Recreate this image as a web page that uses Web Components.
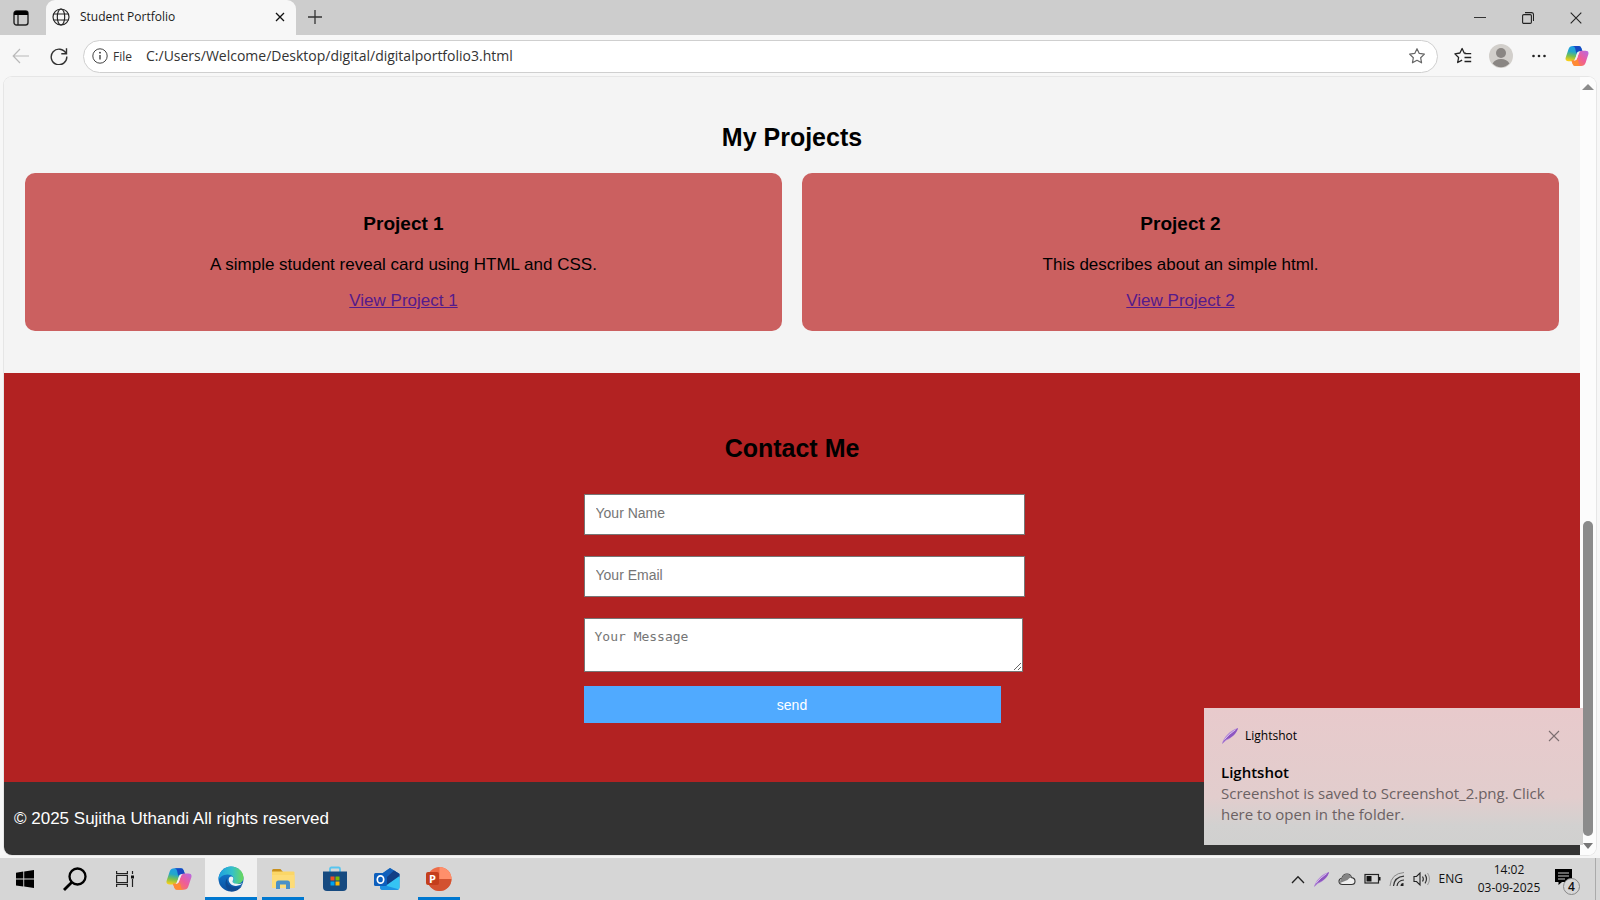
<!DOCTYPE html>
<html lang="en">
<head>
<meta charset="utf-8">
<title>Student Portfolio</title>
<style>
  body { margin: 0; font-family: "Open Sans", "Noto Sans", sans-serif; color: #1b1b1b; }
</style>
</head>
<body>
<desktop-screen>
  <tab-strip slot="window">Student Portfolio</tab-strip>
  <address-toolbar slot="window" scheme="File" url="C:/Users/Welcome/Desktop/digital/digitalportfolio3.html"></address-toolbar>
  <page-viewport slot="window">
    <projects-section heading="My Projects">
      <project-card heading="Project 1" link="View Project 1">A simple student reveal card using HTML and CSS.</project-card>
      <project-card heading="Project 2" link="View Project 2">This describes about an simple html.</project-card>
    </projects-section>
    <contact-section></contact-section>
    <page-footer>© 2025 Sujitha Uthandi All rights reserved</page-footer>
    <toast-notification slot="overlay" app="Lightshot" heading="Lightshot">Screenshot is saved to Screenshot_2.png. Click here to open in the folder.</toast-notification>
  </page-viewport>
  <task-bar slot="taskbar"></task-bar>
</desktop-screen>

<script>
const define = (name, render) => customElements.define(name, class extends HTMLElement {
  constructor() { super(); this.attachShadow({ mode: 'open' }); }
  connectedCallback() { this.shadowRoot.innerHTML = render(this); }
});
const attr = (el, n) => el.getAttribute(n) || '';

const copilot = `<defs>
  <linearGradient id="a" x1=".6" y1="0" x2=".4" y2="1"><stop offset="0" stop-color="#1f9be8"/><stop offset=".4" stop-color="#22a7c9"/><stop offset=".7" stop-color="#7cc04b"/><stop offset="1" stop-color="#f5cf1a"/></linearGradient>
  <linearGradient id="b" x1="1" y1="0" x2="0" y2="1"><stop offset="0" stop-color="#b56be6"/><stop offset=".45" stop-color="#ee5c9a"/><stop offset="1" stop-color="#ff8a34"/></linearGradient></defs>
  <path d="M8.500 1.200H15q2 0 2.700 2.200l1.300 3.800h-3.300q-2 0-2.700 2.200l-1.900 6q-.7 2.200-2.900 2.200H3.700Q-.4 17.600.7 13.600L3.700 4.500Q4.800 1.200 8.500 1.200z" fill="url(#a)"/>
  <path d="M10.500 1.200H15q2 0 2.700 2.200l1.300 3.800h-4.300q-1.700 0-2.500 1.700L11 3.500Q10.500 1.500 8.500 1.200z" fill="#1748c2"/>
  <path d="M17.500 22.800H11q-2 0-2.700-2.200L7 16.800h3.300q2 0 2.700-2.200l1.900-6q.7-2.200 2.900-2.200h4.500q4.100 0 3 4l-3 9.100q-1.100 3.300-4.800 3.300z" fill="url(#b)"/>
  <path d="M15.500 22.800H11q-2 0-2.700-2.200L7 16.800h4.300q1.700 0 2.500-1.700l1.200 5.400q.5 2 2.500 2.300z" fill="#ff8a34"/>
  <path d="M13 9.400q.6-2 2.300-2.200h1.500q-1.300.4-1.900 2.300l-1.900 5.100q-.6 2-2.300 2.200H9.500q1-.4 1.600-2.200z" fill="#f6eef3"/>`;
const star = 'M9 1.700l2.250 4.700 5.150.7-3.750 3.600.9 5.100L9 13.300l-4.550 2.500.9-5.100L1.600 7.100l5.150-.7z';
const feather = `<path d="M1 17C2 11 9 3 17 1c-1 5-6 10-12 12.500z" fill="#b48bd8"/><path d="M1 17C4 12 9 6 17 1c-1.500 6-7 10-12 11.500z" fill="#8d56c0"/><path d="M3.500 12.500Q8 7 14.500 2.800" stroke="#e2cdf0" stroke-width=".8"/>`;

/* name: [width, height, viewBox, markup] */
const ICONS = {
  workspaces: [16, 16, '0 0 16 16', '<rect x="1" y="1" width="14" height="14" rx="2.500" fill="none" stroke="#222" stroke-width="1.400"/><path d="M1 5V3.500Q1 1 3.500 1h9Q15 1 15 3.500V5z" fill="#000"/><path d="M5 5v10" stroke="#222" stroke-width="1.300"/>'],
  globe: [18, 18, '0 0 18 18', '<g fill="none" stroke="#222" stroke-width="1.150"><circle cx="9" cy="9" r="8"/><ellipse cx="9" cy="9" rx="3.700" ry="8"/><path d="M1.700 6h14.600M1.700 12h14.600"/></g>'],
  tabclose: [10, 10, '0 0 10 10', '<path d="M1 1l8 8M9 1l-8 8" stroke="#111" stroke-width="1.300" fill="none"/>'],
  plus: [16, 16, '0 0 16 16', '<path d="M8 1v14M1 8h14" stroke="#333" stroke-width="1.300"/>'],
  minimize: [12, 12, '0 0 12 12', '<path d="M0 5.500h12" stroke="#333" stroke-width="1"/>'],
  restore: [12, 12, '0 0 12 12', '<g fill="none" stroke="#222" stroke-width="1.100"><rect x=".6" y="2.600" width="8.800" height="8.800" rx="1.200"/><path d="M3 .6h6.500q2 0 2 2V9"/></g>'],
  close: [12, 12, '0 0 12 12', '<path d="M.7.7l10.600 10.600M11.300.7.7 11.300" stroke="#222" stroke-width="1.100"/>'],
  toastclose: [12, 12, '0 0 12 12', '<path d="M1 1l10 10M11 1 1 11" stroke="#7b6e70" stroke-width="1.100"/>'],
  back: [18, 16, '0 0 18 16', '<path d="M17 8H1.500M8 1 1.200 8 8 15" fill="none" stroke="#b9b9b9" stroke-width="1.200"/>'],
  reload: [18, 18, '0 0 18 18', '<path d="M16 6.500A7.800 7.800 0 1 0 16.800 9.500M16.500 1.300v5.400h-5.200" fill="none" stroke="#333" stroke-width="1.400"/>'],
  info: [16, 16, '0 0 16 16', '<circle cx="8" cy="8" r="7.200" fill="none" stroke="#444"/><path d="M8 7v4.600" stroke="#333" stroke-width="1.300"/><circle cx="8" cy="4.700" r=".9" fill="#333"/>'],
  star: [18, 18, '0 0 18 18', `<path d="${star}" fill="none" stroke="#666" stroke-width="1.200" stroke-linejoin="round"/>`],
  favorites: [18, 18, '0 0 18 18', '<path d="M12 6.400 10.200 6 8.100 1.500 5.900 6 .9 6.900l3.700 3.600-.9 5 4.400-2.400M10.500 6.700h6.700M10.500 10.500h6.700M10.500 14.500h6.700" fill="none" stroke="#222" stroke-width="1.300" stroke-linejoin="round"/>'],
  avatar: [24, 24, '0 0 24 24', '<circle cx="12" cy="12" r="12" fill="#d2cfcb"/><circle cx="12" cy="9" r="5" fill="#8a8683"/><path d="M3.600 19.500Q6 15 12 15t8.400 4.500Q17 23.200 12 23.200t-8.400-3.700z" fill="#8a8683"/>'],
  dots: [16, 16, '0 0 16 16', '<g fill="#222"><circle cx="2.500" cy="8" r="1.300"/><circle cx="8" cy="8" r="1.300"/><circle cx="13.500" cy="8" r="1.300"/></g>'],
  copilot: [24, 22, '0 0 26 24', copilot],
  feather: [18, 18, '0 0 18 18', feather],
  up: [12, 6, '0 0 12 6', '<path d="M6 0l6 6H0z" fill="#8b8b8b"/>'],
  down: [10, 6, '0 0 10 6', '<path d="M5 6 0 0h10z" fill="#777"/>'],
  windows: [18, 18, '0 0 18 18', '<path d="M0 2.700 7.300 1.600v6.900H0zM8.200 1.500 18 0v8.500H8.200zM0 9.400h7.300v7L0 15.400zM8.200 9.400H18V18l-9.800-1.400z" fill="#000"/>'],
  search: [24, 24, '0 0 24 24', '<circle cx="14.500" cy="9.500" r="8" fill="none" stroke="#000" stroke-width="2.300"/><path d="M8.800 15.200 1 23" stroke="#000" stroke-width="2.800"/>'],
  taskview: [18, 18, '0 0 18 18', '<g fill="none" stroke="#222" stroke-width="1.200"><path d="M.6 1v2.600h10.800V1M.6 17v-2.600h10.800V17M.6 5.500h10.800v7H.6z"/><path d="M16.500 1v3M16.500 9v8"/></g><path d="M15 5.500h3v3h-3z" fill="#111"/>'],
  edge: [26, 26, '0 0 26 26', `<defs><linearGradient id="e" x1="0" x2="1"><stop offset="0" stop-color="#1d9fe0"/><stop offset=".55" stop-color="#35c1c8"/><stop offset="1" stop-color="#6bd957"/></linearGradient><linearGradient id="f" x1="0" y1="0" x2="0" y2="1"><stop offset="0" stop-color="#1583d8"/><stop offset="1" stop-color="#0b4f9f"/></linearGradient></defs>
    <circle cx="13" cy="13" r="12.500" fill="url(#f)"/><path d="M.6 12C2 4.500 7.500.5 13 .5 20.500.5 25.500 6 25.500 11.500c0 4-3 6.500-7 6.500-3.300 0-4.500-1.800-3.700-2.800 2.200-3-.3-6.700-5.300-6.700C5 8.500 1.500 11.500.6 14z" fill="url(#e)"/>
    <path d="M9.300 12c-1.500 5 2 9.500 8.700 9.500 2.500 0 4.500-.7 6-1.600Q20 25.500 13.500 25.500C8 24 5.500 17 9.300 12z" fill="#0f4a93"/>
    <path d="M14.700 15q1.300-2 .3-3.700Q13 9.300 11 11.800c-1.500 4 2 8.200 7 8.200q4.200 0 7-3-3 1.300-6.300.8-5-.6-4-2.800z" fill="#eef3f6"/>`],
  explorer: [24, 22, '0 0 24 22', '<path d="M1 2.500Q1 1 2.500 1h7L12 4H1z" fill="#c9901c"/><path d="M1 3.500h21.500q1 0 1 1V20H1z" fill="#fbd667"/><path d="M1 7h22.500v13H1z" fill="#fddc78"/><path d="M5 21v-6q0-2.500 2.500-2.500h9Q19 12.500 19 15v6h-4v-4.500H9V21z" fill="#4b91c8"/>'],
  store: [26, 26, '0 0 26 26', '<path d="M8 6V3q0-1.500 1.500-1.500h7Q18 1.500 18 3v3" fill="none" stroke="#58c5ef" stroke-width="1.800"/><path d="M1 5.500h24V21q0 4-4 4H5q-4 0-4-4z" fill="#164a80"/><path d="M8.500 10.500h4v4h-4z" fill="#f25022"/><path d="M13.500 10.500h4v4h-4z" fill="#7fba00"/><path d="M8.500 15.500h4v4h-4z" fill="#00a4ef"/><path d="M13.500 15.500h4v4h-4z" fill="#ffb900"/>'],
  outlook: [26, 24, '0 0 26 24', '<path d="M6 8 16 1l9.500 6v13q0 3-3 3H9q-3 0-3-3z" fill="#1b87dc"/><path d="M6 8 16 1l9.500 6L13 15 6 13z" fill="#1560b8"/><path d="M13 10 20 3.600 25.500 7v3L13 18z" fill="#123f86"/><path d="M10 20 25.500 9v11q0 3-3 3H9z" fill="#35c4f3"/><path d="M6 17l18.500 5.200q-.8.800-2 .8H9q-3 0-3-3z" fill="#1d92e2"/><rect x="0" y="6" width="13" height="13" rx="1.500" fill="#0d5fbd"/><ellipse cx="6.500" cy="12.500" rx="3.200" ry="3.700" fill="none" stroke="#fff" stroke-width="1.700"/>'],
  wifi: [16, 16, '0 0 16 16', '<g fill="none"><path d="M1 15Q2 2.500 15 1.500" stroke="#888"/><path d="M4.500 15Q5.500 6 15 5.200M8 15q.7-5.500 7-6" stroke="#333" stroke-width="1.200"/></g><path d="M11.500 15q0-3 3-3v3z" fill="#222"/>'],
  battery: [17, 12, '0 0 17 12', '<rect x="1" y="1.500" width="13.500" height="8.500" fill="none" stroke="#222" stroke-width="1.200"/><path d="M2.500 3h5v5.500h-5zM15 4h1.500v3.500H15z" fill="#111"/>'],
  cloud: [18, 14, '0 0 18 14', '<path d="M4.500 12.500Q1 12.500 1 9.300 1 6.800 3.800 6.300 5 2 9 2q3.500 0 4.600 3.600Q17 6 17 9.200q0 3.300-3.500 3.300z" fill="#eee" stroke="#333" stroke-width="1.100"/><path d="M3.800 6.300Q5 2 9 2q3.500 0 4.600 3.600Q11 6 9.500 8L2 11Q2 7 3.800 6.300z" fill="#858585"/>'],
  chevron: [14, 9, '0 0 14 9', '<path d="M1 8l6-6.300L13 8" fill="none" stroke="#222" stroke-width="1.300"/>'],
  speaker: [18, 16, '0 0 18 16', '<path d="M1 5.500h2.500L7 2v12l-3.500-3.500H1z" fill="none" stroke="#222" stroke-width="1.100"/><path d="M9.500 5.500q1.700 2.500 0 5M12 3.700q3 4.300 0 8.600" fill="none" stroke="#333" stroke-width="1.200"/><path d="M14.500 2q4 6 0 12" fill="none" stroke="#999"/>'],
  message: [17, 16, '0 0 17 16', '<path d="M0 0h17v13H7l-3.500 3v-3H0z" fill="#000"/><path d="M3 4h11M3 7h11M3 10h7" stroke="#ccc"/>'],
};
define('ui-icon', el => {
  const [w, h, box, body] = ICONS[attr(el, 'name')];
  return `<style>:host{display:inline-flex;flex:none}svg{display:block}</style><svg width="${attr(el, 'size') || w}" height="${attr(el, 'size') || h}" viewBox="${box}" fill="none" aria-hidden="true">${body}</svg>`;
});

const RESET = `*{box-sizing:border-box}button{border:0;padding:0;margin:0;background:none;font:inherit;color:inherit;display:flex;align-items:center;justify-content:center}`;

define('desktop-screen', () => `<style>
  :host{display:flex;flex-direction:column;height:100vh;overflow:hidden;background:#d6d6d6}
  main{flex:1;min-height:0;display:flex;flex-direction:column;background:#f7f7f7;border-bottom:3px solid #f5f5f5}
  </style><main><slot name="window"></slot></main><slot name="taskbar"></slot>`);

define('tab-strip', () => `<style>${RESET}
  :host{display:flex;flex:none;height:35px;background:#cdcdcd}
  .side{width:46px;padding-right:4px}
  .tab{display:flex;align-items:center;width:250px;padding:0 11px 2px 6px;border-radius:9px 9px 0 0;background:#f7f7f7;font-size:12px;line-height:16px}
  .tab span{flex:1;padding-left:10px}
  .new{width:38px;padding-bottom:2px}
  .controls{margin-left:auto;display:flex}
  .controls button{width:48px}
  </style>
  <button class="side" aria-label="Tab actions"><ui-icon name="workspaces"></ui-icon></button>
  <div class="tab"><ui-icon name="globe"></ui-icon><span><slot></slot></span><button aria-label="Close tab"><ui-icon name="tabclose"></ui-icon></button></div>
  <button class="new" aria-label="New tab"><ui-icon name="plus"></ui-icon></button>
  <div class="controls"><button aria-label="Minimize"><ui-icon name="minimize"></ui-icon></button><button aria-label="Restore"><ui-icon name="restore"></ui-icon></button><button aria-label="Close"><ui-icon name="close"></ui-icon></button></div>`);

define('address-toolbar', el => `<style>${RESET}
  :host{display:flex;flex:none;align-items:center;height:42px;padding:0 4px 0 2px}
  .nav{width:38px;height:33px}
  .box{flex:1;display:flex;align-items:center;height:33px;margin:0 6px 0 5px;padding:0 11px 0 8px;border:1px solid #cfcfcf;border-radius:17px;background:#fff}
  .scheme{display:flex;align-items:center;gap:5px;font-size:12px;color:#333}
  input{flex:1;min-width:0;border:0;outline:0;margin-left:14px;padding:0;background:none;font:14px/20px "Open Sans","Noto Sans",sans-serif;color:#333}
  .tool{width:38px;height:33px}
  </style>
  <button class="nav" aria-label="Back"><ui-icon name="back"></ui-icon></button>
  <button class="nav" aria-label="Refresh"><ui-icon name="reload"></ui-icon></button>
  <div class="box"><span class="scheme"><ui-icon name="info"></ui-icon>${attr(el, 'scheme')}</span>
    <input type="text" aria-label="Address" value="${attr(el, 'url')}">
    <button aria-label="Add to favorites"><ui-icon name="star"></ui-icon></button></div>
  <button class="tool" aria-label="Favorites"><ui-icon name="favorites"></ui-icon></button>
  <button class="tool" aria-label="Profile"><ui-icon name="avatar"></ui-icon></button>
  <button class="tool" aria-label="Settings and more"><ui-icon name="dots"></ui-icon></button>
  <button class="tool" aria-label="Copilot"><ui-icon name="copilot"></ui-icon></button>`);

define('page-viewport', () => `<style>${RESET}
  :host{position:relative;display:flex;flex:1;min-height:0;margin:0 4px;border-radius:8px;overflow:hidden;background:#fff;box-shadow:0 0 0 1px #e6e6e6}
  .page{flex:1;min-width:0;overflow:hidden;background:#f4f4f4;font-family:"Liberation Sans",Arial,sans-serif;color:#000;display:flex;flex-direction:column}
  .bar{display:flex;flex-direction:column;align-items:center;width:16px;padding:7px 0 6px;background:#fcfcfc}
  .track{flex:1;display:flex;flex-direction:column;align-items:center;padding:0 0 7px}
  .before{flex:432}
  .thumb{flex:315;width:10px;border-radius:5px;background:#8b8b8b}
  </style><div class="page"><slot></slot></div>
  <div class="bar"><ui-icon name="up"></ui-icon><div class="track"><div class="before"></div><div class="thumb"></div></div><ui-icon name="down"></ui-icon></div>
  <slot name="overlay"></slot>`);

define('projects-section', el => `<style>
  :host{display:block;padding:46px 21px 42px}
  h2{margin:0 0 22px;font-size:25px;line-height:28px;text-align:center}
  .grid{display:grid;grid-template-columns:1fr 1fr;gap:20px}
  </style><h2>${attr(el, 'heading')}</h2><div class="grid"><slot></slot></div>`);

define('project-card', el => `<style>
  :host{display:block;padding:40px 20px 20px;border-radius:10px;background:#cb6060;text-align:center;font-size:17px;line-height:20px}
  h3{margin:0 0 20px;font-size:19px;line-height:22px}
  p{margin:0 0 16px}
  a{display:inline-block;color:#551a8b;text-decoration:underline}
  .more{display:flex;justify-content:center}
  </style><h3>${attr(el, 'heading')}</h3><p><slot></slot></p><div class="more"><a href="#">${attr(el, 'link')}</a></div>`);

define('contact-section', () => `<style>${RESET}
  :host{display:block;padding:61px 21px 59px;background:#b22222}
  h2{margin:0 0 32px;font-size:25px;line-height:28px;text-align:center}
  form{display:flex;flex-direction:column;width:417px;max-width:100%;margin:0 auto}
  input,textarea{border:1px solid #767676;border-radius:0;background:#fff;outline:0}
  input{width:441px;height:41px;margin:0 0 21px;padding:0 11px 3px;font:14px/18px "Liberation Sans",Arial,sans-serif}
  textarea{width:439px;height:54px;margin:0 0 14px;padding:10px;font:13px/16px "DejaVu Sans Mono",monospace}
  ::placeholder{color:#757575;opacity:1}
  button{height:37px;background:#50aaff;color:#fff;font-size:14px;line-height:18px}
  </style><h2>Contact Me</h2>
  <form><input type="text" aria-label="Your Name" placeholder="Your Name"><input type="email" aria-label="Your Email" placeholder="Your Email"><textarea aria-label="Your Message" placeholder="Your Message"></textarea><button type="button">send</button></form>`);

define('page-footer', () => `<style>:host{display:block;flex:1;padding:27px 10px;background:#333;color:#fff;font-size:17px;line-height:20px}</style><slot></slot>`);

define('toast-notification', el => `<style>${RESET}
  :host{box-sizing:border-box;position:absolute;right:13px;bottom:10px;width:379px;padding:18px 17px 20px;background:linear-gradient(#e8cacc,#e2cdcd 65%,#d2d1d0 86%,#d0d0cf);color:#000}
  header{display:flex;align-items:center;gap:6px;margin-bottom:16px;padding-right:6px;font-size:12px;line-height:20px}
  header button{margin-left:auto}
  strong{display:block;font-size:15px;font-weight:600;line-height:21px}
  p{margin:0;font-size:15px;line-height:21px;color:#6b6163}
  </style><header><ui-icon name="feather"></ui-icon>${attr(el, 'app')}<button aria-label="Dismiss"><ui-icon name="toastclose"></ui-icon></button></header>
  <strong>${attr(el, 'heading')}</strong><p><slot></slot></p>`);

define('powerpoint-icon', () => `<style>
  :host{display:grid;grid-template-columns:26px;position:relative}
  svg{display:block}
  b{position:absolute;left:0;top:6px;width:13px;height:13px;border-radius:2px;background:#c43e1c;color:#fff;font:bold 11px/13px "Open Sans",sans-serif;text-align:center}
  </style><svg width="26" height="26" viewBox="0 0 26 26"><circle cx="13.500" cy="13" r="12" fill="#ed6c47"/><path d="M13.500 1a12 12 0 0 1 12 12h-12z" fill="#ff8f6b"/><path d="M1.500 13h24a12 12 0 0 1-24 0z" fill="#d35230"/></svg><b>P</b>`);

define('task-bar', () => `<style>${RESET}
  :host{display:flex;flex:none;height:42px;background:#d6d6d6;color:#111}
  nav{display:flex}
  nav button{width:50px}
  .apps{display:flex;margin-left:3px}
  .apps button{width:52px;border-bottom:3px solid transparent;padding-top:2px}
  .apps .open{width:42px;margin:0 5px;border-color:#0078d0}
  .apps .active{background:#f0f0f0;border-color:#0078d0}
  .tray{margin-left:auto;display:flex;align-items:center;gap:8px;padding-right:12px;font-size:12px;line-height:18px}
  .clock{width:76px;text-align:center}
  .notes{position:relative;width:28px;height:28px;padding-top:4px;align-items:flex-start;justify-content:flex-start}
  .badge{position:absolute;left:8px;top:13px;width:17px;height:17px;border:1px solid #888;border-radius:50%;background:#d6d6d6;font-weight:600;font-size:12px;line-height:15px;text-align:center}
  .edge{width:5px;border-left:1px solid #aaa}
  </style>
  <nav><button aria-label="Start"><ui-icon name="windows"></ui-icon></button><button aria-label="Search"><ui-icon name="search"></ui-icon></button><button aria-label="Task view"><ui-icon name="taskview"></ui-icon></button>
  <div class="apps"><button aria-label="Copilot"><ui-icon name="copilot" size="26"></ui-icon></button><button class="active" aria-label="Edge"><ui-icon name="edge"></ui-icon></button><button class="open" aria-label="File Explorer"><ui-icon name="explorer"></ui-icon></button><button aria-label="Store"><ui-icon name="store"></ui-icon></button><button aria-label="Outlook"><ui-icon name="outlook"></ui-icon></button><button class="open" aria-label="PowerPoint"><powerpoint-icon></powerpoint-icon></button></div></nav>
  <div class="tray"><ui-icon name="chevron"></ui-icon><ui-icon name="feather" size="17"></ui-icon><ui-icon name="cloud"></ui-icon><ui-icon name="battery"></ui-icon><ui-icon name="wifi"></ui-icon><ui-icon name="speaker"></ui-icon><span>ENG</span><div class="clock"><div>14:02</div><div>03-09-2025</div></div><button class="notes" aria-label="Notifications"><ui-icon name="message"></ui-icon><span class="badge">4</span></button></div><div class="edge"></div>`);
</script>
</body>
</html>
